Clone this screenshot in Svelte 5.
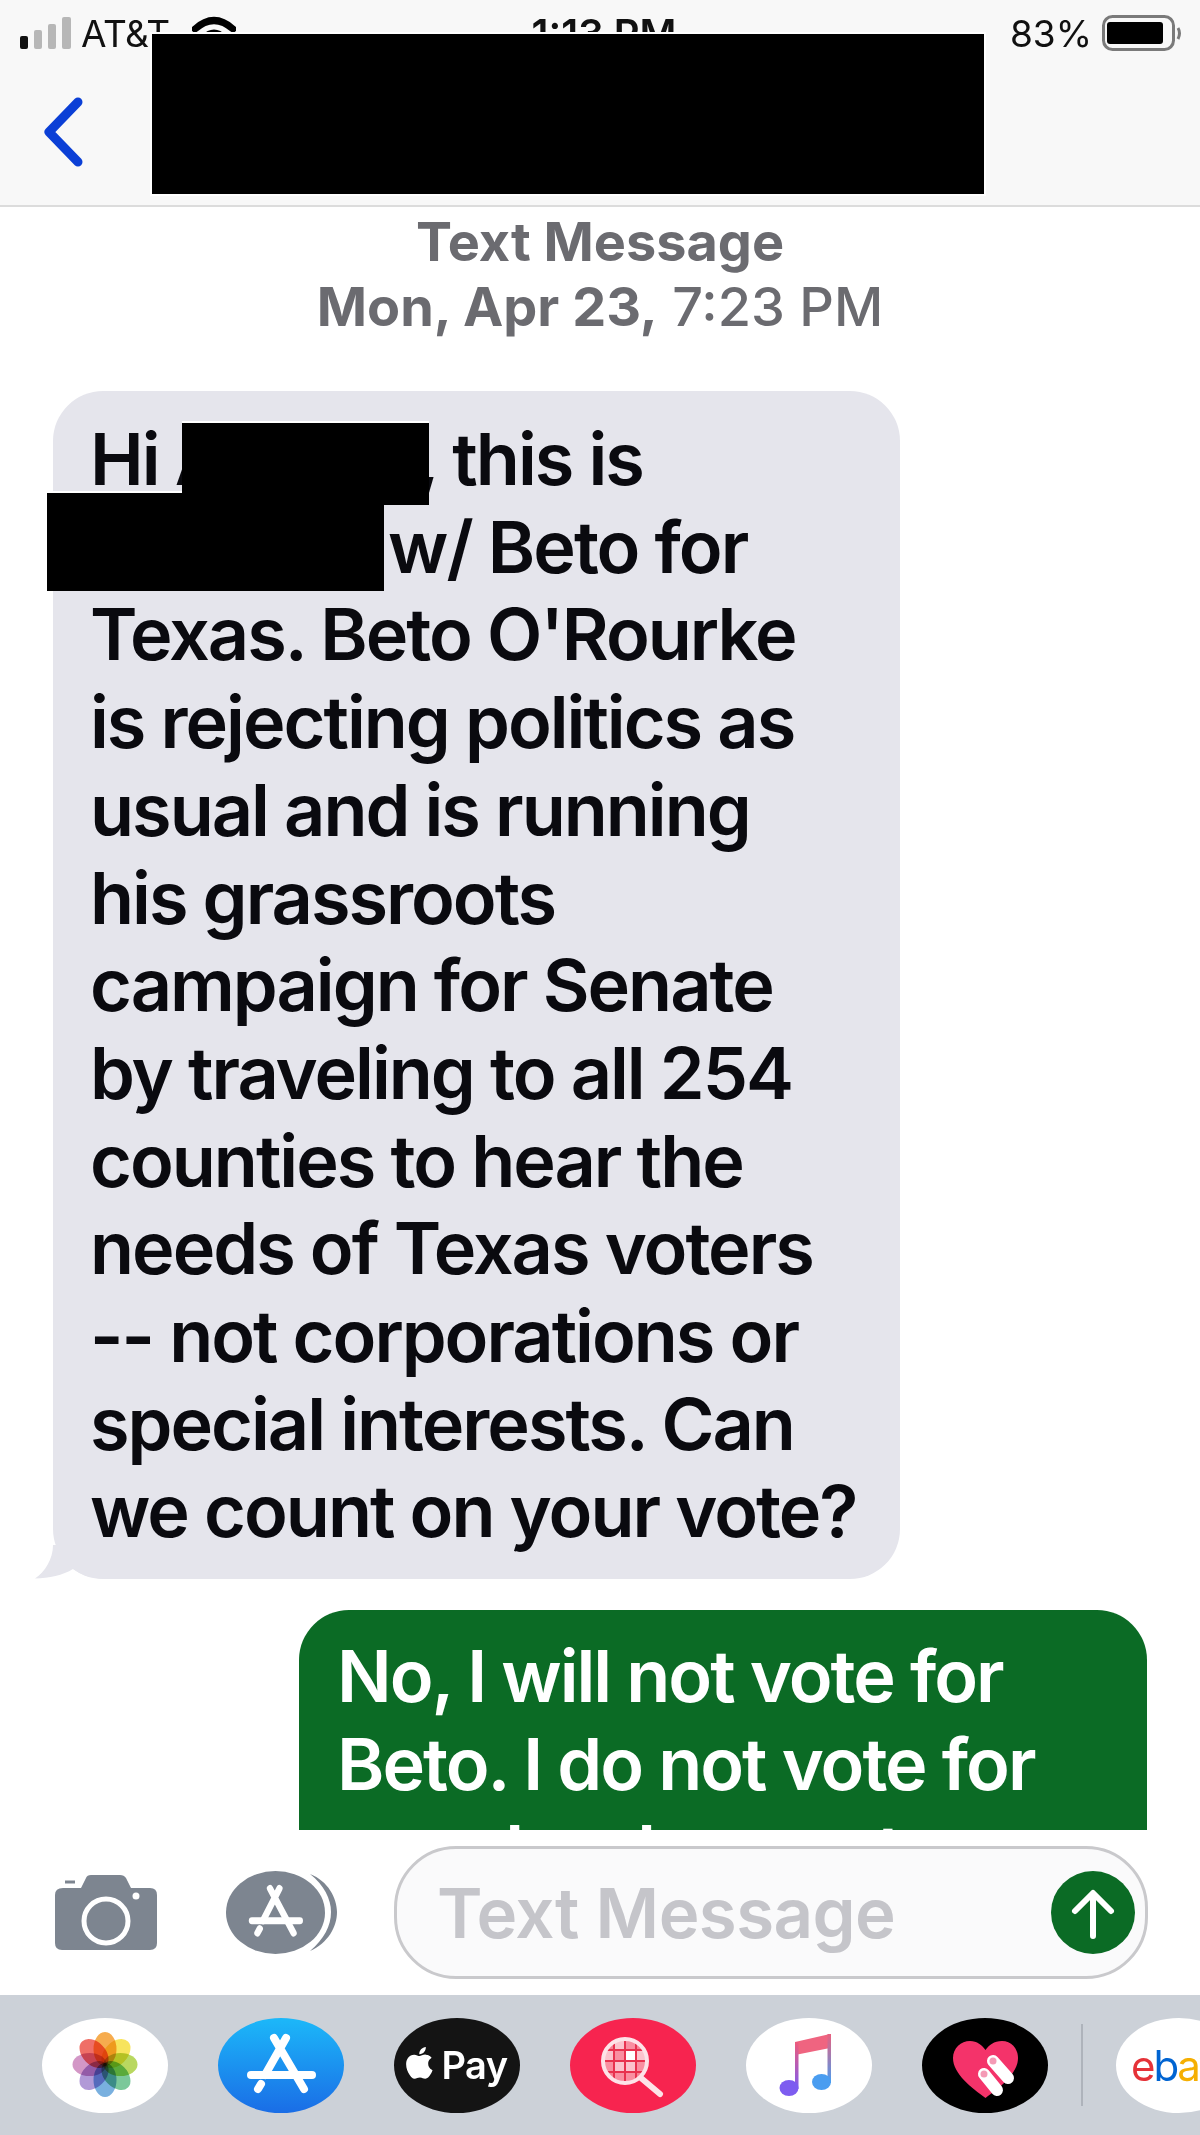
<script>
  const bubble_lines = [
    "Texas. Beto O'Rourke",
    "is rejecting politics as",
    "usual and is running",
    "his grassroots",
    "campaign for Senate",
    "by traveling to all 254",
    "counties to hear the",
    "needs of Texas voters",
    "-- not corporations or",
    "special interests. Can",
    "we count on your vote?"
  ];
  const reply_lines = ["No, I will not vote for", "Beto. I do not vote for", "people who want"];
  const petals = ["#f5a33a", "#f6e14b", "#b2d44e", "#6cc28f", "#6aa7dc", "#a98ed3", "#cf8cc0", "#ee5f56"];
  const lens_tiles = [
    [0, 0, "#f67f92"], [1, 0, "#fbc3cd"], [2, 0, "#f98fa1"], [3, 0, "#f67f92"],
    [0, 1, "#fbc3cd"], [1, 1, "#f98fa1"], [2, 1, "#fff"], [3, 1, "#fbc3cd"],
    [0, 2, "#f98fa1"], [1, 2, "#fbc3cd"], [2, 2, "#fbc3cd"], [3, 2, "#f98fa1"],
    [0, 3, "#f67f92"], [1, 3, "#f98fa1"], [2, 3, "#f98fa1"], [3, 3, "#f67f92"]
  ];
</script>

{#snippet store_glyph()}
  <path d="M68 20 L47 57 M56 20 L86 71" />
  <path d="M33 57 H94" />
  <path d="M43 66 L40 71" />
{/snippet}

<div class="phone">
  <header class="top">
    <div class="status">
      <div class="status-left">
        <svg class="signal" width="52" height="33" viewBox="0 0 52 33">
          <rect x="1" y="19" width="8" height="13" rx="2" fill="#111" />
          <rect x="15" y="13" width="8" height="19" rx="2" fill="#b7b7b7" />
          <rect x="29" y="7" width="8" height="25" rx="2" fill="#b7b7b7" />
          <rect x="43" y="0" width="9" height="32" rx="2" fill="#b7b7b7" />
        </svg>
        <span class="carrier">AT&amp;T</span>
        <svg class="wifi" width="44" height="32" viewBox="0 0 44 32">
          <path d="M3 13 Q22 -4 41 13" />
          <path d="M12 22 Q22 12 32 22" />
        </svg>
      </div>
      <span class="clock">1:13 PM</span>
      <div class="status-right">
        <span class="percent">83%</span>
        <svg width="80" height="36" viewBox="0 0 80 36">
          <rect x="1.5" y="1.5" width="70" height="33" rx="9" fill="none" stroke="#7a7a7a" stroke-width="3" />
          <rect x="5" y="7" width="56" height="22" rx="3" fill="#000" />
          <path d="M76 13 Q79 18 76 24" fill="none" stroke="#7a7a7a" stroke-width="3" />
        </svg>
      </div>
    </div>
    <nav class="nav">
      <svg width="42" height="70" viewBox="0 0 42 70">
        <path d="M36 5 L7 35 L36 65" fill="none" stroke="#0b3fd6" stroke-width="9" stroke-linecap="round" stroke-linejoin="round" />
      </svg>
    </nav>
  </header>

  <main class="thread">
    <div class="stamp">
      <div class="stamp-kind">Text Message</div>
      <div><b>Mon, Apr 23,</b> 7:23 PM</div>
    </div>

    <div class="bubble incoming">
      <div class="line">Hi <span class="gap-name">A</span>, this is</div>
      <div class="line"><span class="gap-sender"></span>w/ Beto for</div>
      {#each bubble_lines as line}
        <div class="line">{line}</div>
      {/each}
      <svg class="tail" width="70" height="34" viewBox="0 0 70 34">
        <path d="M18 0 C18 14 10 27 0 33.5 C14 33.5 28 30 38 24 C46 30 56 33 70 34 L70 0 Z" fill="#e5e5ec" />
      </svg>
    </div>

    <div class="bubble outgoing">
      {#each reply_lines as line}
        <div class="line">{line}</div>
      {/each}
    </div>
  </main>

  <section class="composer">
    <svg class="camera" width="102" height="76" viewBox="0 0 102 76">
      <path d="M8 13 H26 L31 3 Q32 0 36 0 H65 Q69 0 71 3 L76 13 H95 Q102 13 102 20 V68 Q102 75 95 75 H7 Q0 75 0 68 V20 Q0 13 8 13 Z" fill="#7d8590" />
      <path d="M10 7 H20" stroke="#7d8590" stroke-width="3" />
      <circle cx="51" cy="46" r="22" fill="none" stroke="#fff" stroke-width="5" />
      <circle cx="81" cy="21" r="3.5" fill="#fff" />
    </svg>

    <svg class="apps-button" width="112" height="83" viewBox="0 0 112 83">
      <ellipse cx="49.5" cy="41.5" rx="49.5" ry="41.5" fill="#7d8590" />
      <path d="M84 3 C102 10 111 27 111 41 C111 56 102 72 84 80 C98 68 105 55 105 41 C105 28 98 14 84 3 Z" fill="#7d8590" />
      <svg x="0" y="0" width="99" height="83" viewBox="0 0 126 95" preserveAspectRatio="none">
        <g fill="none" stroke="#fff" stroke-width="8" stroke-linecap="round">
          {@render store_glyph()}
        </g>
      </svg>
    </svg>

    <div class="field">
      <span class="placeholder">Text Message</span>
      <svg width="84" height="83" viewBox="0 0 84 83">
        <ellipse cx="42" cy="41.5" rx="42" ry="41.5" fill="#0b6b25" />
        <path d="M42 65 V23 M24 40 L42 22 L60 40" fill="none" stroke="#fff" stroke-width="6" stroke-linecap="round" stroke-linejoin="round" />
      </svg>
    </div>
  </section>

  <footer class="drawer">
    <div class="app white">
      <svg width="126" height="95" viewBox="0 0 126 95">
        <g style="isolation: isolate">
          {#each petals as color, i}
            <ellipse class="petal" cx="63" cy="31" rx="11.5" ry="17" fill={color} transform="rotate({i * 45} 63 46.5)" />
          {/each}
        </g>
      </svg>
    </div>

    <div class="app">
      <svg width="126" height="95" viewBox="0 0 126 95">
        <defs>
          <linearGradient id="store-blue" x1="0" y1="0" x2="0" y2="1">
            <stop offset="0" stop-color="#1cb8f9" />
            <stop offset="1" stop-color="#1a6de6" />
          </linearGradient>
        </defs>
        <ellipse cx="63" cy="47.5" rx="63" ry="47.5" fill="url(#store-blue)" />
        <g fill="none" stroke="#fff" stroke-width="8" stroke-linecap="round">
          {@render store_glyph()}
        </g>
      </svg>
    </div>

    <div class="app pay">
      <svg width="30" height="34" viewBox="3 1 19 22" preserveAspectRatio="none">
        <path fill="#fff" d="M17.05 12.54c-.03-2.6 2.12-3.85 2.22-3.91-1.21-1.77-3.09-2.01-3.76-2.04-1.6-.16-3.12.94-3.93.94-.81 0-2.06-.92-3.39-.89-1.74.03-3.35 1.01-4.25 2.57-1.81 3.14-.46 7.8 1.3 10.35.86 1.25 1.89 2.65 3.24 2.6 1.3-.05 1.79-.84 3.36-.84 1.57 0 2.01.84 3.39.81 1.4-.02 2.28-1.27 3.14-2.53.99-1.45 1.4-2.85 1.42-2.93-.03-.01-2.72-1.04-2.74-4.13zM14.47 4.9c.72-.87 1.2-2.08 1.07-3.28-1.03.04-2.28.69-3.02 1.55-.66.77-1.24 2-1.09 3.18 1.15.09 2.32-.58 3.04-1.45z" />
      </svg>
      <span>Pay</span>
    </div>

    <div class="app">
      <svg width="126" height="95" viewBox="0 0 126 95">
        <defs>
          <clipPath id="lens"><ellipse cx="55" cy="43" rx="22" ry="22" /></clipPath>
        </defs>
        <ellipse cx="63" cy="47.5" rx="63" ry="47.5" fill="#f7244f" />
        <path d="M71 60 L90 76" stroke="#fde3e8" stroke-width="6" stroke-linecap="round" />
        <g clip-path="url(#lens)">
          <rect x="33" y="21" width="44" height="44" fill="#e8324f" />
          {#each lens_tiles as [col, row, fill]}
            <rect x={34 + col * 11} y={22 + row * 11} width="9" height="9" {fill} />
          {/each}
        </g>
        <ellipse cx="55" cy="43" rx="22" ry="22" fill="none" stroke="#fde3e8" stroke-width="4" />
      </svg>
    </div>

    <div class="app white">
      <svg width="126" height="95" viewBox="0 0 126 95">
        <defs>
          <linearGradient id="stem-left" x1="0" y1="0" x2="0" y2="1">
            <stop offset="0" stop-color="#ee5b7b" />
            <stop offset="1" stop-color="#7d5cf0" />
          </linearGradient>
          <linearGradient id="stem-right" x1="0" y1="0" x2="0" y2="1">
            <stop offset="0" stop-color="#e9607e" />
            <stop offset="1" stop-color="#4a9df0" />
          </linearGradient>
        </defs>
        <path d="M49 24 L84 16 V30 L49 37 Z" fill="#ef6480" />
        <rect x="49" y="24" width="3.5" height="47" fill="url(#stem-left)" />
        <rect x="81.5" y="16" width="3.5" height="49" fill="url(#stem-right)" />
        <ellipse cx="43" cy="70" rx="9.5" ry="8" fill="#7d5cf0" />
        <ellipse cx="75.5" cy="64" rx="9.5" ry="8" fill="#4a9df0" />
      </svg>
    </div>

    <div class="app">
      <svg width="126" height="95" viewBox="0 0 126 95">
        <ellipse cx="63" cy="47.5" rx="63" ry="47.5" fill="#000" />
        <path d="M63.5 80 C50 70 31 56 31 40 C31 30 39 23 48 23 C55 23 60 27 63.5 32 C67 27 72 23 80 23 C89 23 96 30 96 40 C96 56 77 70 63.5 80 Z" fill="#f4336a" />
        <path d="M62 56 L75 72 M71 43 L86 60" stroke="#fff" stroke-width="12" stroke-linecap="round" />
        <circle cx="62" cy="56" r="3.5" fill="#f49ab5" />
        <circle cx="71" cy="43" r="3.5" fill="#f49ab5" />
      </svg>
    </div>

    <div class="divider"></div>

    <div class="app white ebay">
      <span class="e">e</span><span class="b">b</span><span class="a">a</span><span class="y">y</span>
    </div>
  </footer>

  <div class="redact bar-title"></div>
  <div class="redact bar-sender"></div>
  <div class="redact bar-name"></div>
</div>

<style>
  :global(body) {
    background: #fff;
  }

  .phone {
    position: relative;
    width: 1200px;
    height: 2135px;
    display: flex;
    flex-direction: column;
    overflow: hidden;
    background: #fff;
    font-family: Inter, "Liberation Sans", sans-serif;
  }

  /* header */
  .top {
    height: 207px;
    flex-shrink: 0;
    display: flex;
    flex-direction: column;
    box-sizing: border-box;
    background: #f8f8f8;
    border-bottom: 2px solid #dcdcdc;
  }

  .status {
    height: 66px;
    display: grid;
    grid-template-columns: 1fr auto 1fr;
    align-items: center;
    font-size: 37px;
    color: #111;
  }
  .status-left {
    display: flex;
    align-items: center;
    padding-left: 19px;
  }
  .carrier {
    margin-left: 10px;
    letter-spacing: -0.5px;
  }
  .wifi {
    margin: -3px 0 0 22px;
    fill: none;
    stroke: #000;
    stroke-width: 7;
    stroke-linecap: round;
  }
  .clock {
    font-weight: 600;
    font-size: 40px;
    margin-left: 8px;
  }
  .status-right {
    display: flex;
    align-items: center;
    justify-content: flex-end;
    gap: 10px;
    padding-right: 18px;
  }

  .nav {
    flex: 1;
    display: flex;
    align-items: center;
    padding-left: 42px;
    padding-bottom: 7px;
  }

  /* messages */
  .thread {
    flex: 1;
    min-height: 0;
    overflow: hidden;
    display: flex;
    flex-direction: column;
  }

  .stamp {
    margin-top: 2px;
    text-align: center;
    font-size: 54px;
    line-height: 65px;
    font-weight: 500;
    color: #6b6b70;
  }
  .stamp b {
    font-weight: 700;
  }
  .stamp-kind {
    font-weight: 700;
  }

  .bubble {
    position: relative;
    flex-shrink: 0;
    box-sizing: border-box;
    font-size: 72px;
    line-height: 87.7px;
    font-weight: 600;
    letter-spacing: -2px;
  }
  .line {
    white-space: pre;
  }
  .incoming {
    width: 847px;
    height: 1188px;
    margin: 52px 0 0 53px;
    padding: 24px 0 0 37px;
    border-radius: 50px;
    background: #e5e5ec;
    color: #0a0a0f;
  }
  .outgoing {
    width: 848px;
    height: 320px;
    margin: 31px 0 0 299px;
    padding: 22px 0 0 38px;
    border-radius: 50px;
    background: #0b6b25;
    color: #fff;
  }

  .gap-name {
    display: inline-block;
    width: 242px;
  }
  .gap-sender {
    display: inline-block;
    width: 298px;
  }

  .tail {
    position: absolute;
    left: -18px;
    bottom: 0;
  }

  /* input row */
  .composer {
    height: 165px;
    flex-shrink: 0;
    display: flex;
    align-items: center;
    padding-left: 55px;
    background: #fff;
  }
  .camera {
    flex-shrink: 0;
  }
  .apps-button {
    flex-shrink: 0;
    margin-left: 69px;
  }
  .field {
    width: 754px;
    height: 133px;
    margin-left: 56px;
    flex-shrink: 0;
    box-sizing: border-box;
    display: flex;
    align-items: center;
    justify-content: space-between;
    padding: 0 10px 0 40px;
    border: 3px solid #c9c9cc;
    border-radius: 62px;
    background: #fafafb;
  }
  .placeholder {
    font-size: 69px;
    font-weight: 600;
    letter-spacing: -0.6px;
    color: #c5c5ca;
  }

  /* app drawer */
  .drawer {
    height: 140px;
    flex-shrink: 0;
    display: flex;
    align-items: center;
    gap: 50px;
    padding-left: 42px;
    box-sizing: border-box;
    background: #ccd1d8;
  }
  .app {
    width: 126px;
    height: 95px;
    flex-shrink: 0;
    border-radius: 50%;
    display: flex;
    align-items: center;
    justify-content: center;
  }
  .app.white {
    background: #fff;
  }
  .petal {
    mix-blend-mode: multiply;
    opacity: 0.9;
  }
  .pay {
    gap: 5px;
    background: #141414;
    color: #fff;
    font-size: 38px;
    font-weight: 600;
    letter-spacing: -0.5px;
  }
  .pay svg {
    margin-top: -5px;
  }
  .divider {
    width: 2px;
    height: 82px;
    flex-shrink: 0;
    margin: 0 -17px;
    background: #aeb3bb;
  }
  .ebay {
    justify-content: flex-start;
    padding-left: 15px;
    box-sizing: border-box;
    font-size: 42px;
    letter-spacing: -2px;
  }
  .e {
    color: #e53238;
  }
  .b {
    color: #0064d2;
  }
  .a {
    color: #f5af02;
  }
  .y {
    color: #86b817;
  }

  /* black blocks lying over the screenshot */
  .redact {
    position: absolute;
    background: #000;
    box-shadow: 0 -2px 0 #fff;
  }
  .bar-title {
    left: 152px;
    top: 34px;
    width: 832px;
    height: 160px;
    box-shadow: 0 0 0 2px #fff;
  }
  .bar-name {
    left: 182px;
    top: 423px;
    width: 247px;
    height: 82px;
  }
  .bar-sender {
    left: 47px;
    top: 493px;
    width: 337px;
    height: 98px;
  }
</style>
